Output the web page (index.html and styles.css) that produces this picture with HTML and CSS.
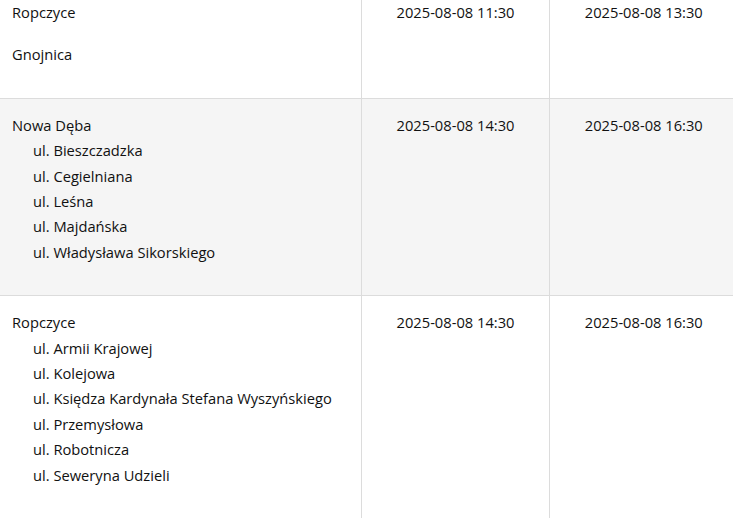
FILE: index.html
```html
<!DOCTYPE html>
<html lang="pl">
<head>
<meta charset="utf-8">
<title>Wyłączenia</title>
<link rel="stylesheet" href="styles.css">
</head>
<body>
<div class="wrap">
<table class="outages">
  <colgroup>
    <col class="c-area">
    <col class="c-date">
    <col class="c-date">
  </colgroup>
  <tbody>
    <tr>
      <td class="area">
        <div class="city"><div class="name">Ropczyce</div></div>
        <div class="city"><div class="name">Gnojnica</div></div>
      </td>
      <td class="date">2025-08-08 11:30</td>
      <td class="date">2025-08-08 13:30</td>
    </tr>
    <tr class="alt">
      <td class="area">
        <div class="city">
          <div class="name">Nowa Dęba</div>
          <ul class="streets">
            <li>ul. Bieszczadzka</li>
            <li>ul. Cegielniana</li>
            <li>ul. Leśna</li>
            <li>ul. Majdańska</li>
            <li>ul. Władysława Sikorskiego</li>
          </ul>
        </div>
      </td>
      <td class="date">2025-08-08 14:30</td>
      <td class="date">2025-08-08 16:30</td>
    </tr>
    <tr>
      <td class="area">
        <div class="city">
          <div class="name">Ropczyce</div>
          <ul class="streets">
            <li>ul. Armii Krajowej</li>
            <li>ul. Kolejowa</li>
            <li>ul. Księdza Kardynała Stefana Wyszyńskiego</li>
            <li>ul. Przemysłowa</li>
            <li>ul. Robotnicza</li>
            <li>ul. Seweryna Udzieli</li>
          </ul>
        </div>
      </td>
      <td class="date">2025-08-08 14:30</td>
      <td class="date">2025-08-08 16:30</td>
    </tr>
  </tbody>
</table>
</div>
</body>
</html>
```

FILE: styles.css
```css
html, body {
  margin: 0;
  padding: 0;
  background: #fff;
}
body {
  overflow: hidden;
  font-family: "Open Sans", "Noto Sans", sans-serif;
  font-size: 14.7px;
  color: #111;
}
.wrap {
  width: 733px;
  overflow: hidden;
  margin-top: -15px;
}
.outages {
  width: 737px;
  border-collapse: collapse;
  table-layout: fixed;
}
.c-area { width: 361px; }
.c-date { width: 188px; }
.outages td {
  vertical-align: top;
  padding: 14px 11px 13px 12px;
  line-height: 25.4px;
  border-left: 1px solid #dcdcdc;
  border-top: 1px solid #dcdcdc;
}
.outages td:first-child { border-left: none; }
.outages tr.alt td { background: #f5f5f5; }
.date { text-align: center; }
.city { margin-bottom: 17px; }
.streets {
  list-style: none;
  margin: 0;
  padding: 0 0 0 21px;
}
```
